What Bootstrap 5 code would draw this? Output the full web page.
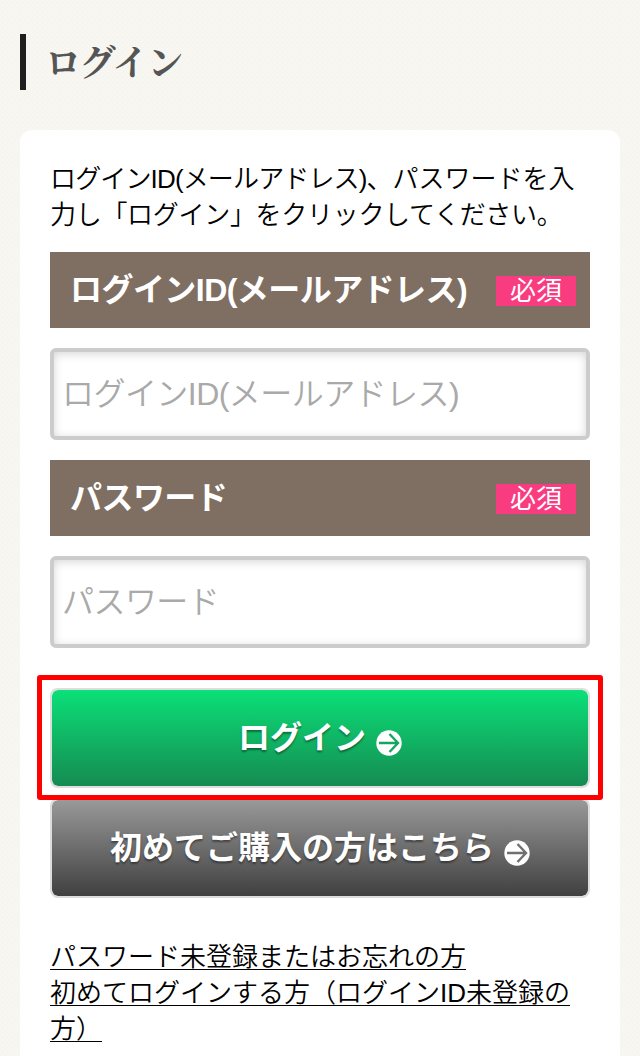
<!DOCTYPE html>
<html lang="ja">
<head>
<meta charset="utf-8">
<meta name="viewport" content="width=device-width, initial-scale=1">
<title>ログイン</title>
<link href="https://cdn.jsdelivr.net/npm/bootstrap@5.3.0/dist/css/bootstrap.min.css" rel="stylesheet">
<style>
html { overflow: hidden; }
body {
  height: 1056px; overflow: hidden; color: #000;
  font: 350 26px/36px "Liberation Sans", "Noto Sans CJK JP", sans-serif;
  background: radial-gradient(circle, #f0efe9 0.6px, transparent 1px) 0 0 / 5px 5px, radial-gradient(circle, #f0efe9 0.6px, transparent 1px) 2.5px 2.5px / 5px 5px, #f7f6f0;
}
.page-title {
  margin: 34px 20px 40px; height: 56px; padding-left: 19px;
  border-left: 6px solid #1e1e1e; color: #555;
  font: 700 36px/54px "Noto Serif CJK JP", "Noto Sans CJK JP", serif; letter-spacing: -1.3px;
}
.panel { margin: 0 20px; height: 960px; padding: 31px 30px 30px; background: #fff; border-radius: 12px; }
.intro { margin: 0 0 19px; white-space: nowrap; }
.squeeze { letter-spacing: -.85px; }
.squeeze-sm { letter-spacing: -.55px; }
.squeeze-xs { letter-spacing: -.3px; }
.field-title { height: 76px; padding: 0 14px 0 20px; background: #7f6e62; color: #fff; font-size: 32px; line-height: 76px; font-weight: 700; }
.required { width: 80px; height: 30px; margin-top: 2px; background: #f93c80; font-size: 26px; line-height: 30px; font-weight: 400; text-align: center; }
.field {
  height: 92px; margin: 20px 0; padding: 0 8px; border: 4px solid #ccc; border-radius: 6px;
  font-size: 32px; font-weight: 350; box-shadow: inset 0 2px 10px rgba(0,0,0,.16);
}
.field::placeholder { color: #a9a9a9; opacity: 1; }
.action {
  height: 100px; padding: 0; border: 2px solid #ddd; border-radius: 8px; color: #fff; font-size: 32px; font-weight: 700;
  line-height: 96px; text-shadow: 0 2px 2px rgba(0,0,0,.4); background-clip: padding-box;
}
.action svg { width: 26px; height: 26px; margin: 10px 0 0 10px; }
.go { background-image: linear-gradient(#0be078, #158b51); color: #fff; }
.first { background-image: linear-gradient(#999, #404040); margin-top: 10px; }
.callout { inset: -13px -13px -12px -13px; border: 5.5px solid #f00; border-radius: 3px; z-index: 2; pointer-events: none; }
.help { margin-top: 41px; white-space: nowrap; }
.help a { color: #000; text-decoration: underline; text-decoration-thickness: 1px; text-underline-offset: 3px; text-decoration-skip-ink: none; }
</style>
</head>
<body>
<h1 class="page-title">ログイン</h1>
<main class="panel">
  <p class="intro"><span class="squeeze">ログインID(メールアドレス)</span>、パスワードを入<br><span class="squeeze-xs">力し「ログイン」をクリックしてください。</span></p>
  <form>
    <div class="field-title d-flex align-items-center justify-content-between"><span class="squeeze-sm">ログインID(メールアドレス)</span><span class="required">必須</span></div>
    <input class="field squeeze-sm form-control" type="text" placeholder="ログインID(メールアドレス)">
    <div class="field-title d-flex align-items-center justify-content-between"><span class="squeeze-sm">パスワード</span><span class="required">必須</span></div>
    <input class="field squeeze-sm form-control" type="password" placeholder="パスワード">
    <div class="position-relative" style="margin-top:40px">
      <button type="button" class="action go btn w-100 d-flex justify-content-center align-items-center">ログイン<svg viewBox="0 0 26 26"><circle cx="13" cy="13" r="12.7" fill="#fff"/><path d="M3 13H21.5M13.5 4L22 13L13.5 22" fill="none" stroke="#16a660" stroke-width="2.4"/></svg></button>
      <div class="callout position-absolute"></div>
    </div>
    <button type="button" class="action first btn w-100 d-flex justify-content-center align-items-center">初めてご購入の方はこちら<svg viewBox="0 0 26 26"><circle cx="13" cy="13" r="12.7" fill="#fff"/><path d="M3 13H21.5M13.5 4L22 13L13.5 22" fill="none" stroke="#707070" stroke-width="2.4"/></svg></button>
  </form>
  <div class="help"><a href="#">パスワード未登録またはお忘れの方</a><br><a href="#">初めてログインする方（ログインID未登録の<br>方）</a></div>
</main>
<script src="https://cdn.jsdelivr.net/npm/bootstrap@5.3.0/dist/js/bootstrap.bundle.min.js"></script>
</body>
</html>
